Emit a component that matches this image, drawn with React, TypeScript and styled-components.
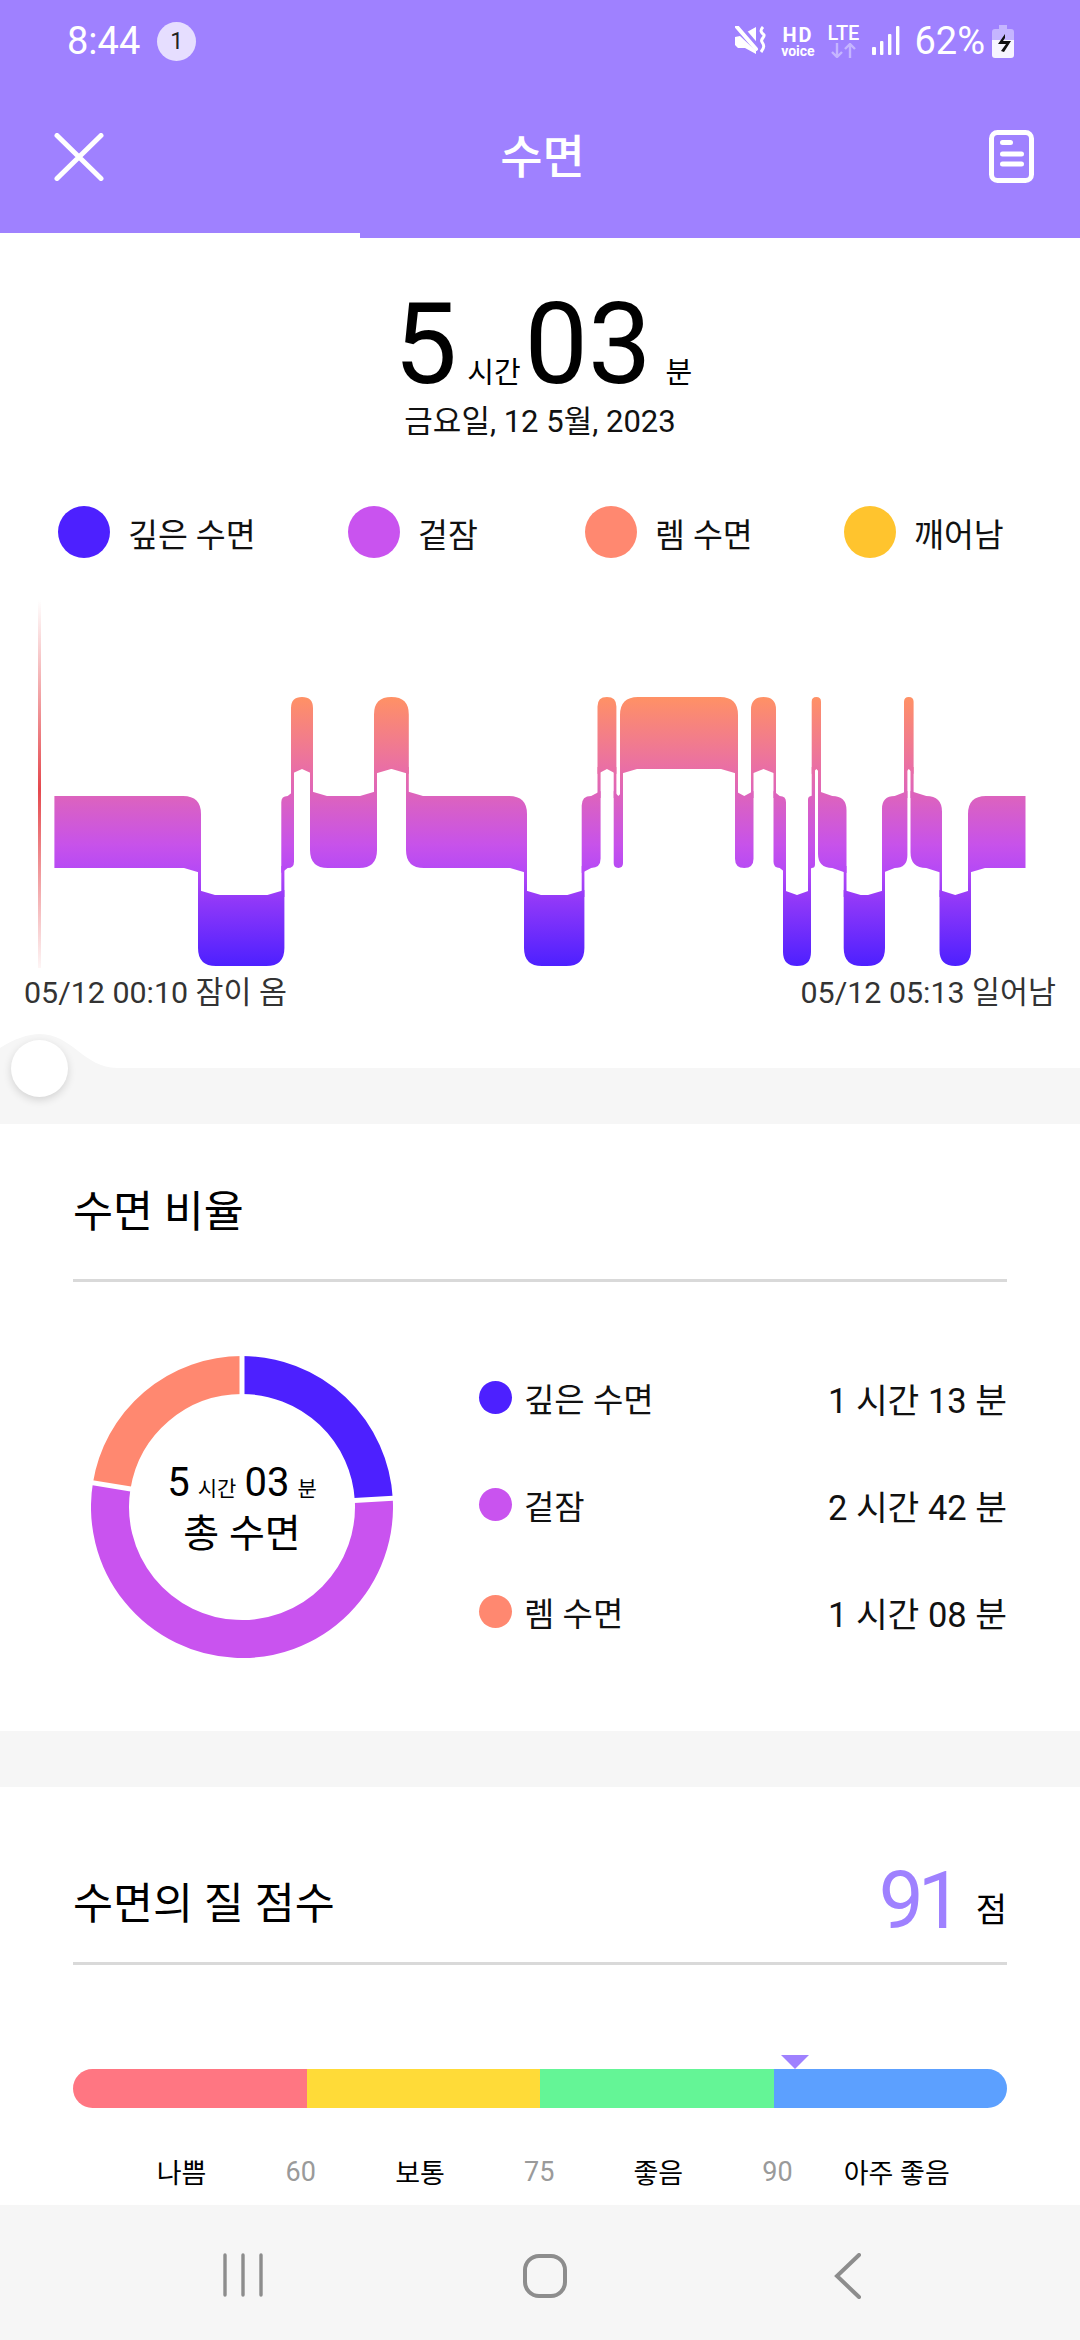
import styled, { createGlobalStyle } from "styled-components";

const FONT = `Roboto, "Noto Sans CJK KR", sans-serif`;
const PURPLE = "#9f81ff";

const GlobalStyle = createGlobalStyle`
  html, body { margin: 0; padding: 0; background: #fff; }
  body { font-family: ${FONT}; color: #000; }
  * { box-sizing: border-box; }
`;

const Page = styled.div`
  width: 1080px;
  height: 2340px;
  display: flex;
  flex-direction: column;
  overflow: hidden;
  background: #fff;
`;

const Top = styled.header`
  background: ${PURPLE};
  color: #fff;
  flex: none;
`;

const StatusBar = styled.div`
  height: 80px;
  display: flex;
  align-items: center;
  padding: 2px 66px 0 67px;
`;

const Time = styled.span`
  font-size: 38px;
  line-height: 1;
`;

const Badge = styled.span`
  width: 39px;
  height: 39px;
  margin-left: 17px;
  border-radius: 50%;
  background: #e6deff;
  color: #222;
  font-size: 23px;
  display: flex;
  align-items: center;
  justify-content: center;
`;

const StatusRight = styled.div`
  margin-left: auto;
  display: flex;
  align-items: center;
`;

const Hd = styled.div`
  margin-left: 15px;
  width: 33px;
  display: flex;
  flex-direction: column;
  align-items: center;
  font-weight: 700;
  font-size: 20px;
  letter-spacing: 2px;
  line-height: 20px;
  small {
    font-size: 14px;
    letter-spacing: 0;
    line-height: 12px;
    font-weight: 700;
  }
`;

const Lte = styled.div`
  margin-left: 12px;
  width: 34px;
  display: flex;
  flex-direction: column;
  align-items: center;
  font-weight: 500;
  font-size: 20px;
  line-height: 19px;
`;

const Percent = styled.span`
  font-size: 38px;
  line-height: 1;
  margin-left: 14px;
`;

const NavBar = styled.div`
  height: 153px;
  padding: 0 46px 0 54px;
  display: flex;
  align-items: center;
  justify-content: space-between;
  position: relative;
`;

const ScreenTitle = styled.h1`
  margin: 0 0 0 -8px;
  font-size: 46px;
  font-weight: 500;
  line-height: 1;
`;

const TabLine = styled.div`
  height: 5px;
  display: flex;
  &::before {
    content: "";
    width: 360px;
    background: #fff;
  }
`;

const Hero = styled.section`
  flex: none;
  padding-top: 47px;
  display: flex;
  flex-direction: column;
  align-items: center;
`;

const Duration = styled.div`
  display: flex;
  align-items: baseline;
  line-height: 120px;
  height: 120px;
  padding-left: 6px;
`;

const BigNum = styled.span<{ $gap: number }>`
  font-size: 113px;
  margin-right: ${({ $gap }) => $gap}px;
`;

const BigUnit = styled.span<{ $gap: number }>`
  font-size: 29px;
  margin-right: ${({ $gap }) => $gap}px;
`;

const DateLine = styled.div`
  margin-top: -1px;
  font-size: 31px;
  line-height: 36px;
  color: #111;
`;

const Legend = styled.div`
  flex: none;
  margin-top: 66px;
  padding-left: 58px;
  display: grid;
  grid-template-columns: 290px 237px 259px 1fr;
  align-items: center;
  height: 52px;
`;

const LegendItem = styled.div`
  display: flex;
  align-items: center;
  gap: 18px;
  font-size: 32.5px;
  color: #111;
`;

const Dot = styled.span<{ $color: string; $size: number }>`
  flex: none;
  width: ${({ $size }) => $size}px;
  height: ${({ $size }) => $size}px;
  border-radius: 50%;
  background: ${({ $color }) => $color};
`;

const ChartSvg = styled.svg`
  flex: none;
  display: block;
  width: 1080px;
  height: 378px;
  margin-top: 32px;
`;

const TimeLabels = styled.div`
  flex: none;
  height: 36px;
  margin-top: 4px;
  padding: 0 24px;
  display: flex;
  justify-content: space-between;
  align-items: center;
  font-size: 30.4px;
  color: #333;
`;

const SliderWrap = styled.div`
  flex: none;
  position: relative;
  height: 90px;
  margin-top: 26px;
  svg {
    display: block;
  }
`;

const Thumb = styled.div`
  position: absolute;
  left: 11px;
  top: 6px;
  width: 57px;
  height: 57px;
  border-radius: 50%;
  background: #fff;
  box-shadow: 0 3px 8px rgba(0, 0, 0, 0.14);
`;

const Card = styled.section<{ $height: number }>`
  flex: none;
  height: ${({ $height }) => $height}px;
  padding: 0 73px;
`;

const Spacer = styled.div`
  flex: none;
  height: 56px;
  background: #f6f6f6;
`;

const CardHead = styled.div<{ $height: number }>`
  height: ${({ $height }) => $height}px;
  border-bottom: 3px solid #d9d9d9;
  display: flex;
  align-items: flex-end;
  justify-content: space-between;
`;

const CardTitle = styled.h2<{ $lift: number }>`
  margin: 0 0 ${({ $lift }) => $lift}px;
  font-size: 43.5px;
  font-weight: 400;
  line-height: 56px;
`;

const RatioBody = styled.div`
  display: flex;
  align-items: flex-start;
  margin-top: 74px;
  margin-left: 18px;
`;

const DonutBox = styled.div`
  position: relative;
  width: 302px;
  height: 302px;
  flex: none;
  svg {
    display: block;
  }
`;

const DonutText = styled.div`
  position: absolute;
  inset: 0;
  padding-top: 105px;
  display: flex;
  flex-direction: column;
  align-items: center;
`;

const DonutTime = styled.div`
  display: flex;
  align-items: baseline;
  line-height: 44px;
  font-size: 40px;
`;

const DonutUnit = styled.span<{ $gap: number }>`
  font-size: 21px;
  margin: 0 ${({ $gap }) => $gap}px 0 8px;
`;

const DonutLabel = styled.div`
  font-size: 39px;
  line-height: 46px;
`;

const Rows = styled.div`
  flex: 1;
  margin-left: 86px;
  margin-top: -12px;
  display: flex;
  flex-direction: column;
`;

const Row = styled.div`
  height: 107px;
  display: flex;
  align-items: center;
`;

const RowLabel = styled.span`
  margin-left: 12px;
  font-size: 33px;
  color: #111;
`;

const RowValue = styled.span`
  margin-left: auto;
  font-size: 34.5px;
  color: #111;
`;

const ScoreWrap = styled.div`
  display: flex;
  align-items: flex-end;
  margin-bottom: 26px;
`;

const ScoreNum = styled.span`
  font-size: 80px;
  letter-spacing: -6px;
  line-height: 70px;
  color: ${PURPLE};
`;

const ScoreUnit = styled.span`
  font-size: 34px;
  line-height: 40px;
  margin: 0 0 6px 19px;
`;

const MarkerRow = styled.div`
  height: 14px;
  margin-top: 90px;
  position: relative;
`;

const Marker = styled.div`
  position: absolute;
  left: 708px;
  top: 0;
  width: 0;
  height: 0;
  border-left: 14px solid transparent;
  border-right: 14px solid transparent;
  border-top: 14px solid ${PURPLE};
`;

const ScoreBar = styled.div`
  height: 39px;
  border-radius: 20px;
  overflow: hidden;
  display: grid;
  grid-template-columns: repeat(4, 1fr);
`;

const BarPart = styled.div<{ $color: string }>`
  background: ${({ $color }) => $color};
`;

const Scale = styled.div`
  margin: 44px 0 0 49px;
  display: grid;
  grid-template-columns: repeat(7, 119.2px);
  height: 36px;
  align-items: center;
  text-align: center;
`;

const ScaleName = styled.span`
  font-size: 27px;
  white-space: nowrap;
`;

const ScaleNum = styled.span`
  font-size: 27px;
  color: #9a9a9a;
`;

const BottomNav = styled.nav`
  flex: 1;
  background: #f6f6f6;
  display: flex;
  padding: 48px 0 0 222px;
  svg {
    display: block;
  }
`;

// levels: 0 rem, 1 light, 2 deep
const LEVELS = [
  { t: 697, b: 769 },
  { t: 796, b: 868 },
  { t: 895, b: 966 },
];

const SEGMENTS: [number, number, number][] = [
  [54.4, 201, 1], [198, 284.4, 2], [281.3, 294, 1], [291, 313, 0], [310, 377, 1],
  [374, 408.8, 0], [406, 527, 1], [524, 584.4, 2], [581.7, 600.6, 1], [597.5, 616.4, 0],
  [613.7, 623, 1], [620, 738, 0], [735, 753.5, 1], [751, 776, 0], [773.5, 786, 1],
  [783, 811, 2], [808, 815, 1], [811.7, 821, 0], [818, 846.5, 1], [843.7, 885, 2],
  [882, 907.4, 1], [904, 913.6, 0], [910.5, 942, 1], [939.5, 971, 2], [968, 1025.5, 1],
];

const CHART_TOP = 590;

function segmentPath(i: number) {
  const [x0, x1, lvl] = SEGMENTS[i];
  const prev = SEGMENTS[i - 1];
  const next = SEGMENTS[i + 1];
  const { t, b } = LEVELS[lvl];
  const r = Math.min(18, (x1 - x0) / 2);
  const flare = 5;
  const slope = Math.min(17, (x1 - x0) / 2);
  let d = "";

  // top left
  if (!prev) d += `M${x0} ${t}`;
  else if (prev[2] < lvl) d += `M${x0} ${t - flare}L${x0 + slope} ${t}`;
  else d += `M${x0} ${t + r}Q${x0} ${t} ${x0 + r} ${t}`;

  // top right
  if (!next) d += `L${x1} ${t}`;
  else if (next[2] < lvl) d += `L${x1 - slope} ${t}L${x1} ${t - flare}`;
  else d += `L${x1 - r} ${t}Q${x1} ${t} ${x1} ${t + r}`;

  // bottom right
  if (!next) d += `L${x1} ${b}`;
  else if (next[2] > lvl) d += `L${x1} ${b + flare}L${x1 - slope} ${b}`;
  else d += `L${x1} ${b - r}Q${x1} ${b} ${x1 - r} ${b}`;

  // bottom left
  if (!prev) d += `L${x0} ${b}`;
  else if (prev[2] > lvl) d += `L${x0 + slope} ${b}L${x0} ${b + flare}`;
  else d += `L${x0 + r} ${b}Q${x0} ${b} ${x0} ${b - r}`;

  return d + "Z";
}

// the strip where two neighbouring stages overlap
function bridgePath(i: number) {
  const [, x1, lvl] = SEGMENTS[i];
  const [nx0, , nLvl] = SEGMENTS[i + 1];
  const upper = Math.min(lvl, nLvl);
  const lower = Math.max(lvl, nLvl);
  return `M${nx0} ${LEVELS[upper].b - 2}H${x1}V${LEVELS[lower].t + 2}H${nx0}Z`;
}

const Hypnogram = () => (
  <ChartSvg viewBox={`0 ${CHART_TOP} 1080 378`}>
    <defs>
      <linearGradient id="stage" gradientUnits="userSpaceOnUse" x1="0" y1="697" x2="0" y2="966">
        <stop offset="0" stopColor="#ff9165" />
        <stop offset="0.27" stopColor="#e96ea6" />
        <stop offset="0.37" stopColor="#dc63be" />
        <stop offset="0.55" stopColor="#c752ea" />
        <stop offset="0.65" stopColor="#b549f6" />
        <stop offset="0.75" stopColor="#9239f8" />
        <stop offset="1" stopColor="#4d20ff" />
      </linearGradient>
      <linearGradient id="startLine" x1="0" y1="0" x2="0" y2="1">
        <stop offset="0" stopColor="#e5484d" stopOpacity="0" />
        <stop offset="0.5" stopColor="#e5484d" />
        <stop offset="1" stopColor="#e5484d" stopOpacity="0" />
      </linearGradient>
    </defs>
    <rect x="38" y="600" width="3" height="378" fill="url(#startLine)" />
    {SEGMENTS.map((_, i) => (
      <path key={i} d={segmentPath(i)} fill="url(#stage)" />
    ))}
    {SEGMENTS.slice(0, -1).map((_, i) => (
      <path key={i} d={bridgePath(i)} fill="url(#stage)" />
    ))}
  </ChartSvg>
);

function polar(r: number, deg: number) {
  const a = ((deg - 90) * Math.PI) / 180;
  return [151 + r * Math.cos(a), 151 + r * Math.sin(a)];
}

function ringPart(from: number, to: number) {
  const [ax, ay] = polar(132, from);
  const [bx, by] = polar(132, to);
  const large = to - from > 180 ? 1 : 0;
  return `M${ax} ${ay}A132 132 0 ${large} 1 ${bx} ${by}`;
}

const BLUE = "#4d20ff";
const VIOLET = "#c953ef";
const CORAL = "#ff8870";
const YELLOW = "#ffc42e";

const Donut = () => {
  const cuts = [0, 86.7, 279.2];
  return (
    <svg width="302" height="302" viewBox="0 0 302 302">
      <path d={ringPart(0, 86.7)} fill="none" stroke={BLUE} strokeWidth="38" />
      <path d={ringPart(86.7, 279.2)} fill="none" stroke={VIOLET} strokeWidth="38" />
      <path d={ringPart(279.2, 360)} fill="none" stroke={CORAL} strokeWidth="38" />
      {cuts.map((c) => {
        const [ax, ay] = polar(108, c);
        const [bx, by] = polar(156, c);
        return <line key={c} x1={ax} y1={ay} x2={bx} y2={by} stroke="#fff" strokeWidth="5" />;
      })}
    </svg>
  );
};

const MuteIcon = () => (
  <svg width="31" height="30" viewBox="0 0 31 30">
    <path d="M12 6l9-5v16z" fill="#fff" />
    <path d="M0 11l5-1 16 15v3L10 22H3l-3-3z" fill="#fff" />
    <path d="M6 0l18 21" stroke={PURPLE} strokeWidth="3" />
    <path d="M2 1l19 22" stroke="#fff" strokeWidth="4" strokeLinecap="round" />
    <path d="M28 1c-4 4-1 6 1 8 1 2-4 4-2 7 2 3 3 5-1 10" fill="none" stroke="#fff" strokeWidth="3" />
  </svg>
);

const Arrows = () => (
  <svg width="25" height="15" viewBox="0 0 25 15" fill="none" stroke="#c5b5ff" strokeWidth="2.4">
    <path d="M6 0v14M1 9l5 5 5-5" />
    <path d="M19 15V1M14 6l5-5 5 5" />
  </svg>
);

const Signal = () => (
  <svg width="28" height="30" viewBox="0 0 28 30" fill="#fff" style={{ marginLeft: 12 }}>
    <rect x="0" y="21" width="4" height="8" rx="1" />
    <rect x="8" y="15" width="3.4" height="14" rx="1" />
    <rect x="16" y="8" width="3.4" height="21" rx="1" />
    <rect x="24" y="0" width="3.4" height="29" rx="1" />
  </svg>
);

const Battery = () => (
  <svg width="22" height="33" viewBox="0 0 22 33" style={{ marginLeft: 7 }}>
    <path d="M7 0h8v4h4a3 3 0 0 1 3 3v10H0V7a3 3 0 0 1 3-3h4z" fill="#c5b5ff" />
    <path d="M0 15h22v15a3 3 0 0 1-3 3H3a3 3 0 0 1-3-3z" fill="#f7f5ff" />
    <path d="M13 9 6 19h8l-5 7 3 1 7-11h-8l2-3z" fill="#111" />
  </svg>
);

const CloseIcon = () => (
  <svg width="50" height="48" viewBox="0 0 50 48" fill="none" stroke="#fff" strokeWidth="5" strokeLinecap="round">
    <path d="M3 2.5 47 45.5M47 2.5 3 45.5" />
  </svg>
);

const NoteIcon = () => (
  <svg width="45" height="53" viewBox="0 0 45 53" fill="none" stroke="#fff" strokeLinecap="round">
    <rect x="2.5" y="2.5" width="40" height="48" rx="6" strokeWidth="5" />
    <path d="M13.5 12.5h8M13.5 24h19M13.5 34h19" strokeWidth="5" />
  </svg>
);

const HomeNav = () => (
  <>
    <svg width="42" height="44" viewBox="0 0 42 44" fill="none" stroke="#8d8d8d" strokeWidth="3.4" strokeLinecap="round">
      <path d="M3 2v40M21 2v40M39 2v40" />
    </svg>
    <svg width="46" height="46" viewBox="0 0 46 46" fill="none" stroke="#8d8d8d" strokeWidth="4" style={{ marginLeft: 258 }}>
      <rect x="3" y="3" width="40" height="40" rx="14" />
    </svg>
    <svg width="28" height="46" viewBox="0 0 28 46" fill="none" stroke="#8d8d8d" strokeWidth="4" strokeLinecap="round" style={{ marginLeft: 266 }}>
      <path d="M25 2 3 23l22 21" />
    </svg>
  </>
);

const stages = [
  { label: "깊은 수면", color: BLUE },
  { label: "겉잠", color: VIOLET },
  { label: "렘 수면", color: CORAL },
  { label: "깨어남", color: YELLOW },
];

const ratios = [
  { label: "깊은 수면", color: BLUE, value: "1 시간 13 분" },
  { label: "겉잠", color: VIOLET, value: "2 시간 42 분" },
  { label: "렘 수면", color: CORAL, value: "1 시간 08 분" },
];

export default function App() {
  return (
    <Page>
      <GlobalStyle />
      <Top>
        <StatusBar>
          <Time>8:44</Time>
          <Badge>1</Badge>
          <StatusRight>
            <MuteIcon />
            <Hd>
              HD
              <small>voice</small>
            </Hd>
            <Lte>
              LTE
              <Arrows />
            </Lte>
            <Signal />
            <Percent>62%</Percent>
            <Battery />
          </StatusRight>
        </StatusBar>
        <NavBar>
          <CloseIcon />
          <ScreenTitle>수면</ScreenTitle>
          <NoteIcon />
        </NavBar>
        <TabLine />
      </Top>

      <Hero>
        <Duration>
          <BigNum $gap={10}>5</BigNum>
          <BigUnit $gap={4}>시간</BigUnit>
          <BigNum $gap={14}>03</BigNum>
          <BigUnit $gap={0}>분</BigUnit>
        </Duration>
        <DateLine>금요일, 12 5월, 2023</DateLine>
      </Hero>

      <Legend>
        {stages.map((s) => (
          <LegendItem key={s.label}>
            <Dot $color={s.color} $size={52} />
            {s.label}
          </LegendItem>
        ))}
      </Legend>

      <Hypnogram />
      <TimeLabels>
        <span>05/12 00:10 잠이 옴</span>
        <span>05/12 05:13 일어남</span>
      </TimeLabels>

      <SliderWrap>
        <svg width="1080" height="90" viewBox="0 0 1080 90">
          <path d="M0 14C14 5 28 0 40 0C72 0 84 34 117 34H1080V90H0Z" fill="#f6f6f6" />
        </svg>
        <Thumb />
      </SliderWrap>

      <Card $height={607}>
        <CardHead $height={158}>
          <CardTitle $lift={38}>수면 비율</CardTitle>
        </CardHead>
        <RatioBody>
          <DonutBox>
            <Donut />
            <DonutText>
              <DonutTime>
                5<DonutUnit $gap={8}>시간</DonutUnit>03<DonutUnit $gap={0}>분</DonutUnit>
              </DonutTime>
              <DonutLabel>총 수면</DonutLabel>
            </DonutText>
          </DonutBox>
          <Rows>
            {ratios.map((r) => (
              <Row key={r.label}>
                <Dot $color={r.color} $size={33} />
                <RowLabel>{r.label}</RowLabel>
                <RowValue>{r.value}</RowValue>
              </Row>
            ))}
          </Rows>
        </RatioBody>
      </Card>

      <Spacer />

      <Card $height={418}>
        <CardHead $height={178}>
          <CardTitle $lift={29}>수면의 질 점수</CardTitle>
          <ScoreWrap>
            <ScoreNum>91</ScoreNum>
            <ScoreUnit>점</ScoreUnit>
          </ScoreWrap>
        </CardHead>
        <MarkerRow>
          <Marker />
        </MarkerRow>
        <ScoreBar>
          <BarPart $color="#ff7682" />
          <BarPart $color="#ffdb38" />
          <BarPart $color="#64f596" />
          <BarPart $color="#5ca0ff" />
        </ScoreBar>
        <Scale>
          <ScaleName>나쁨</ScaleName>
          <ScaleNum>60</ScaleNum>
          <ScaleName>보통</ScaleName>
          <ScaleNum>75</ScaleNum>
          <ScaleName>좋음</ScaleName>
          <ScaleNum>90</ScaleNum>
          <ScaleName>아주 좋음</ScaleName>
        </Scale>
      </Card>

      <BottomNav>
        <HomeNav />
      </BottomNav>
    </Page>
  );
}
